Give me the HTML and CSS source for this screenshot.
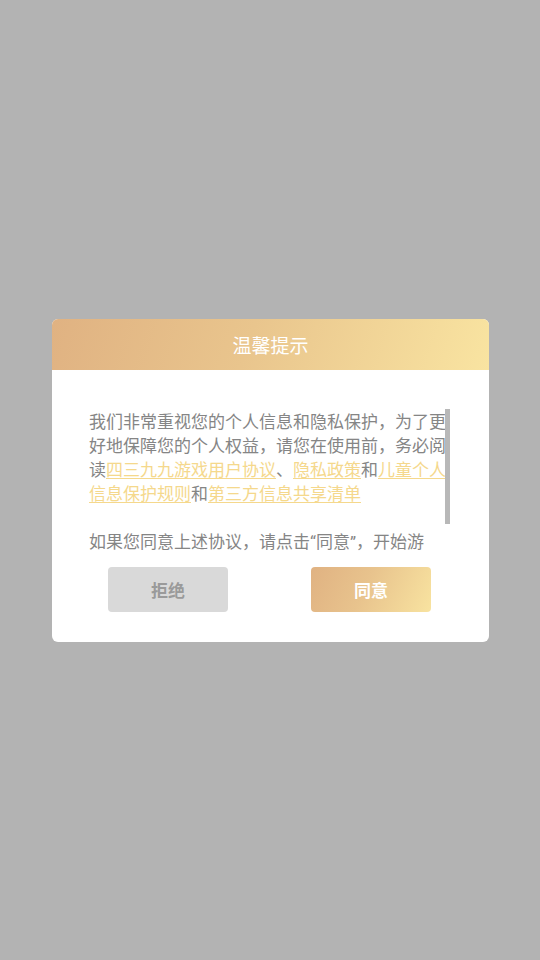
FILE: index.html
```html
<!DOCTYPE html>
<html lang="zh-CN">
<head>
<meta charset="utf-8">
<title>温馨提示</title>
<link rel="stylesheet" href="styles.css">
</head>
<body>
<div class="dialog">
  <div class="dialog-header">温馨提示</div>
  <div class="dialog-body">
    <div class="scroll">
      <div class="scroll-content">
        <p class="para">我们非常重视您的个人信息和隐私保护，为了更好地保障您的个人权益，请您在使用前，务必阅读<a class="link">四三九九游戏用户协议</a>、<a class="link">隐私政策</a>和<a class="link">儿童个人信息保护规则</a>和<a class="link">第三方信息共享清单</a></p>
        <p class="para">如果您同意上述协议，请点击<span class="q">“</span>同意<span class="q">”</span>，开始游</p>
      </div>
      <div class="thumb"></div>
    </div>
    <div class="actions">
      <button class="btn btn-reject">拒绝</button>
      <button class="btn btn-agree">同意</button>
    </div>
  </div>
</div>
</body>
</html>
```
FILE: styles.css
```css
html, body {
  margin: 0;
  padding: 0;
}
body {
  background: #b3b3b3;
  height: 960px;
  display: flex;
  align-items: center;
  justify-content: center;
  font-family: "Noto Sans CJK SC", "Noto Sans", sans-serif;
}
.dialog {
  width: 437px;
  background: #ffffff;
  border-radius: 6px;
  overflow: hidden;
  margin-left: 1px;
}
.dialog-header {
  height: 51px;
  line-height: 51px;
  text-align: center;
  color: #ffffff;
  font-size: 19px;
  background: linear-gradient(108deg, #e0b282 0%, #e9c58d 45%, #f9e4a1 100%);
}
.dialog-body {
  padding: 39px 0 30px 37px;
}
.scroll {
  position: relative;
  width: 361px;
  height: 146px;
  overflow: hidden;
}
.scroll-content {
  width: 357px;
  font-size: 17px;
  line-height: 24px;
  color: #858585;
}
.para {
  margin: 0 0 24px 0;
}
.q {
  font-family: Roboto, "Liberation Sans", sans-serif;
}
.link {
  color: #f5d88c;
  text-decoration: underline;
  text-decoration-thickness: 1px;
  text-underline-offset: 2px;
}
.thumb {
  position: absolute;
  top: 0;
  right: 0;
  width: 5px;
  height: 115px;
  background: #b8b8b8;
}
.actions {
  margin-top: 12px;
  display: flex;
  justify-content: space-between;
  width: 323px;
  padding-left: 19px;
}
.btn {
  width: 120px;
  height: 45px;
  border: none;
  border-radius: 4px;
  font-family: "Noto Sans CJK SC", sans-serif;
  font-size: 17px;
  font-weight: bold;
  padding: 0;
}
.btn-reject {
  background: #d9d9d9;
  color: #9a9a9a;
}
.btn-agree {
  background: linear-gradient(115deg, #e0b282 0%, #e8c38d 45%, #f8e3a0 100%);
  color: #ffffff;
}
```
